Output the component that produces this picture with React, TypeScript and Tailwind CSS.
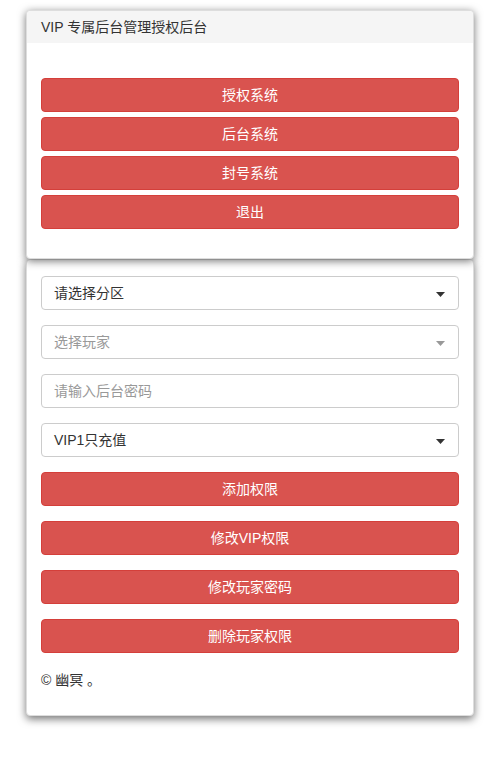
import React from "react"

const font = { fontFamily: '"Liberation Sans", "Noto Sans CJK SC", sans-serif' }

function Caret({ muted }: { muted?: boolean }) {
  return (
    <svg width="9" height="5" viewBox="0 0 9 5" className="absolute right-[13px] top-[15px]">
      <path d="M0 0 L9 0 L4.5 5 Z" fill={muted ? "#999" : "#333"} />
    </svg>
  )
}

function SelectBox({ text, muted }: { text: string; muted?: boolean }) {
  return (
    <div className="relative h-[34px] rounded-[4px] border border-[#ccc] bg-white px-3 text-[14px] leading-[32px]">
      <span className={muted ? "text-[#999]" : "text-[#333]"}>{text}</span>
      <Caret muted={muted} />
    </div>
  )
}

function DangerButton({ label }: { label: string }) {
  return (
    <button className="block h-[34px] w-full rounded-[4px] border border-[#d43f3a] bg-[#d9534f] text-[14px] text-white">
      {label}
    </button>
  )
}

export default function App() {
  return (
    <div className="min-h-[759px] bg-white pt-[10px]" style={font}>
      <div className="mx-[26px] w-[448px]">
        <div className="relative z-10 rounded-[4px] border border-[#ddd] bg-white shadow-[0_2px_8px_rgba(0,0,0,0.55)]">
          <div className="h-[32px] rounded-t-[4px] bg-[#f5f5f5] px-[14px] text-[14px] leading-[32px] text-[#333]">
            VIP 专属后台管理授权后台
          </div>
          <div className="flex flex-col gap-[5px] px-[14px] pt-[35px] pb-[29px]">
            <DangerButton label="授权系统" />
            <DangerButton label="后台系统" />
            <DangerButton label="封号系统" />
            <DangerButton label="退出" />
          </div>
        </div>

        <div className="rounded-[4px] border border-[#ddd] bg-white px-[14px] pt-[16px] pb-[25px] shadow-[0_3px_8px_rgba(0,0,0,0.55)]">
          <div className="flex flex-col gap-[15px]">
            <SelectBox text="请选择分区" />
            <SelectBox text="选择玩家" muted />
            <input
              className="h-[34px] w-full rounded-[4px] border border-[#ccc] px-3 text-[14px] text-[#555] outline-none placeholder:text-[#999]"
              placeholder="请输入后台密码"
              type="password"
            />
            <SelectBox text="VIP1只充值" />
            <DangerButton label="添加权限" />
            <DangerButton label="修改VIP权限" />
            <DangerButton label="修改玩家密码" />
            <DangerButton label="删除玩家权限" />
          </div>
          <p className="mt-[17px] text-[14px] leading-[20px] text-[#333]">© 幽冥 。</p>
        </div>
      </div>
    </div>
  )
}
